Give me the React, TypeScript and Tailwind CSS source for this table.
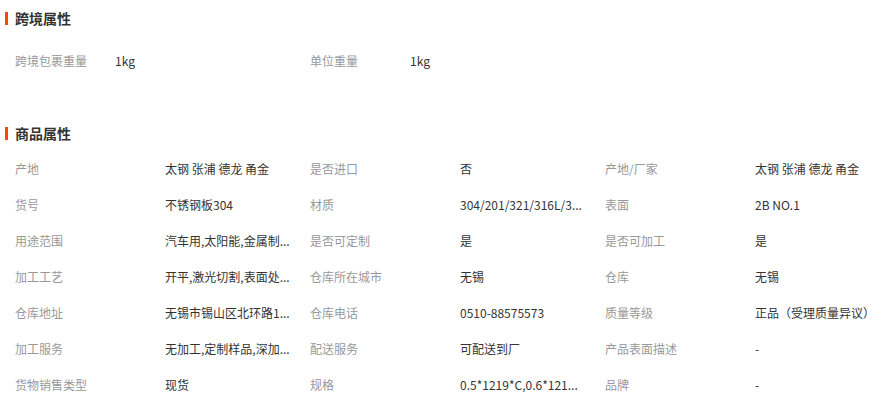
const crossBorder = [
  { label: '跨境包裹重量', value: '1kg' },
  { label: '单位重量', value: '1kg' },
];

// values are already shortened the way the listing shows them
const attrs = [
  { label: '产地', value: '太钢 张浦 德龙 甬金' },
  { label: '是否进口', value: '否' },
  { label: '产地/厂家', value: '太钢 张浦 德龙 甬金' },
  { label: '货号', value: '不锈钢板304' },
  { label: '材质', value: '304/201/321/316L/3...' },
  { label: '表面', value: '2B NO.1' },
  { label: '用途范围', value: '汽车用,太阳能,金属制...' },
  { label: '是否可定制', value: '是' },
  { label: '是否可加工', value: '是' },
  { label: '加工工艺', value: '开平,激光切割,表面处...' },
  { label: '仓库所在城市', value: '无锡' },
  { label: '仓库', value: '无锡' },
  { label: '仓库地址', value: '无锡市锡山区北环路1...' },
  { label: '仓库电话', value: '0510-88575573' },
  { label: '质量等级', value: '正品（受理质量异议）' },
  { label: '加工服务', value: '无加工,定制样品,深加...' },
  { label: '配送服务', value: '可配送到厂' },
  { label: '产品表面描述', value: '-' },
  { label: '货物销售类型', value: '现货' },
  { label: '规格', value: '0.5*1219*C,0.6*121...' },
  { label: '品牌', value: '-' },
];

function SectionTitle({ title }: { title: string }) {
  return (
    <div className="flex h-9 items-center">
      <span className="ml-[5px] h-[13px] w-[3px] bg-[#ff4400]" />
      <span className="ml-[7px] text-[14px] font-bold leading-none text-[#333]">{title}</span>
    </div>
  );
}

export default function App() {
  return (
    <div
      className="w-[882px] h-[408px] overflow-hidden bg-white"
      style={{ fontFamily: '"Noto Sans CJK SC", "Noto Sans", sans-serif' }}
    >
      <SectionTitle title="跨境属性" />
      <div className="mt-[7px] flex pl-[15px]">
        {crossBorder.map((a) => (
          <div key={a.label} className="flex h-9 w-[295px] items-center text-[12px]">
            <span className="w-[100px] text-[#999]">{a.label}</span>
            <span className="text-[#333]">{a.value}</span>
          </div>
        ))}
      </div>

      <div className="mt-9">
        <SectionTitle title="商品属性" />
        <div className="grid grid-cols-[295px_295px_295px] pl-[15px]">
          {attrs.map((a) => (
            <div key={a.label} className="flex h-9 items-center text-[12px]">
              <span className="w-[150px] shrink-0 text-[#999]">{a.label}</span>
              <span className="whitespace-nowrap text-[#333]">{a.value}</span>
            </div>
          ))}
        </div>
      </div>
    </div>
  );
}
